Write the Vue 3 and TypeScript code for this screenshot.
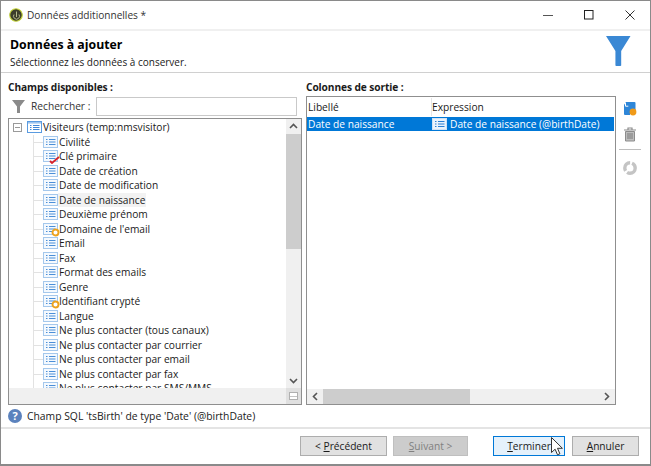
<script setup lang="ts">
interface Field { label: string; mark?: 'key' | 'calc'; hover?: boolean }
const fields: Field[] = [
  { label: 'Civilité' },
  { label: 'Clé primaire', mark: 'key' },
  { label: 'Date de création' },
  { label: 'Date de modification' },
  { label: 'Date de naissance', hover: true },
  { label: 'Deuxième prénom' },
  { label: "Domaine de l'email", mark: 'calc' },
  { label: 'Email' },
  { label: 'Fax' },
  { label: 'Format des emails' },
  { label: 'Genre' },
  { label: 'Identifiant crypté', mark: 'calc' },
  { label: 'Langue' },
  { label: 'Ne plus contacter (tous canaux)' },
  { label: 'Ne plus contacter par courrier' },
  { label: 'Ne plus contacter par email' },
  { label: 'Ne plus contacter par fax' },
  { label: 'Ne plus contacter par SMS/MMS' },
]
</script>

<template>
  <div class="page">
    <div class="window">
      <div class="titlebar">
        <svg class="logo" width="14" height="14" viewBox="0 0 14 14">
          <circle cx="7" cy="7" r="6.3" fill="#3d3d2c" stroke="#c8d83c" stroke-width="1.1" />
          <path d="M7.5 3.5v5.5M5 6.5a3 3 0 1 0 5 0" fill="none" stroke="#b8bc8c" stroke-width="1" />
        </svg>
        <span class="title">Données additionnelles *</span>
        <div class="winctl">
          <svg width="10" height="10" viewBox="0 0 10 10"><path d="M0 5.5h10" stroke="#555" stroke-width="1" /></svg>
          <svg width="10" height="10" viewBox="0 0 10 10"><rect x=".5" y=".5" width="8.5" height="8.5" fill="none" stroke="#222" /></svg>
          <svg width="10" height="10" viewBox="0 0 10 10"><path d="M.5.5l9 9M9.5.5l-9 9" stroke="#333" stroke-width="1" /></svg>
        </div>
      </div>

      <header class="head">
        <div>
          <h1>Données à ajouter</h1>
          <p>Sélectionnez les données à conserver.</p>
        </div>
        <svg class="bigfunnel" width="25" height="30" viewBox="0 0 26 31">
          <path d="M0 0h25.5L15.8 15.5V30.5a1 1 0 0 1-1 .5h-4a1 1 0 0 1-1-.5V15.5z" fill="#3a88d4" />
        </svg>
      </header>

      <main class="body">
        <section class="left">
          <div class="lab">Champs disponibles :</div>
          <div class="search">
            <svg class="sfunnel" width="13" height="13" viewBox="0 0 13 13">
              <path d="M0 0h13L8 6.5V13H5V6.5z" fill="#8a8a8a" />
            </svg>
            <span class="slabel">Rechercher :</span>
            <div class="sinput"></div>
          </div>
          <div class="tree">
            <div class="treemain">
              <div class="rows">
                <div class="root">
                  <span class="minus"></span>
                  <svg class="fi rooti" viewBox="0 0 15 12"><rect x=".5" y=".5" width="14" height="11" fill="#fff" stroke="#5a9be0" /><rect x="1" y="1" width="13" height="1.6" fill="#9cc4ee" /><path d="M3 4.5h1.5M3 6.5h1.5M3 8.5h1.5M6 4.5h6.5M6 6.5h6.5M6 8.5h6.5" stroke="#3f86d6" /></svg>
                  <span>Visiteurs (temp:nmsvisitor)</span>
                </div>
                <div v-for="(f, i) in fields" :key="f.label" class="row">
                  <span class="branch" :class="{ first: i === 0 }"></span>
                  <span class="iconwrap">
                    <svg class="fi" viewBox="0 0 15 12"><rect x=".5" y=".5" width="14" height="11" fill="#f4f9fe" stroke="#a5c8ec" /><path d="M3 3.5h1.5M3 6h1.5M3 8.5h1.5M6 3.5h6.5M6 6h6.5M6 8.5h6.5" stroke="#4b8fd8" /></svg>
                    <svg v-if="f.mark === 'key'" class="mark key" width="11" height="8" viewBox="0 0 11 8"><path d="M1 5l2 2L10 1" fill="none" stroke="#d8222a" stroke-width="1.8" /></svg>
                    <svg v-if="f.mark === 'calc'" class="mark" width="9" height="9" viewBox="0 0 9 9"><circle cx="4.5" cy="4.5" r="3" fill="#fff" stroke="#eda21c" stroke-width="1.9" /></svg>
                  </span>
                  <span class="txt" :class="{ hover: f.hover }">{{ f.label }}</span>
                </div>
              </div>
              <div class="vbar">
                <svg width="15" height="15" viewBox="0 0 15 15"><path d="M4 9l3.5-3.5L11 9" fill="none" stroke="#555" stroke-width="1.6" /></svg>
                <div class="vtrack"><div class="vthumb"></div></div>
                <svg width="15" height="15" viewBox="0 0 15 15"><path d="M4 6l3.5 3.5L11 6" fill="none" stroke="#555" stroke-width="1.6" /></svg>
              </div>
            </div>
            <div class="treefoot">
              <div class="corner"><i></i></div>
            </div>
          </div>
        </section>

        <section class="right">
          <div class="lab">Colonnes de sortie :</div>
          <div class="rightrow">
            <div class="table">
              <div class="thead">
                <span class="c1">Libellé</span>
                <span class="c2">Expression</span>
              </div>
              <div class="tsel">
                <span class="c1">Date de naissance</span>
                <span class="c2 exp">
                  <svg class="fi" viewBox="0 0 15 12"><rect x=".5" y=".5" width="14" height="11" fill="#eaf3fc" stroke="#cfe2f6" /><path d="M3 3.5h1.5M3 6h1.5M3 8.5h1.5M6 3.5h6.5M6 6h6.5M6 8.5h6.5" stroke="#2b7fd4" /></svg>
                  Date de naissance (@birthDate)
                </span>
              </div>
              <div class="tfill"></div>
              <div class="hbar">
                <svg width="16" height="15" viewBox="0 0 16 15"><path d="M10 4L6.5 7.5 10 11" fill="none" stroke="#555" stroke-width="1.6" /></svg>
                <div class="htrack"><div class="hthumb"></div></div>
                <svg width="16" height="15" viewBox="0 0 16 15"><path d="M6 4l3.5 3.5L6 11" fill="none" stroke="#555" stroke-width="1.6" /></svg>
              </div>
            </div>
            <div class="tools">
              <svg width="14" height="15" viewBox="0 0 14 15">
                <path d="M3 1h8.5a1 1 0 0 1 1 1v7H7v5H2a1 1 0 0 1-1-1V4z" fill="#2e86d8" />
                <path d="M2.5 2v3.2h2.8" fill="none" stroke="#fff" />
                <circle cx="10" cy="11" r="3.4" fill="#f09a18" />
              </svg>
              <svg width="14" height="15" viewBox="0 0 14 15">
                <path d="M1 3h12M5 3V1h4v2" fill="none" stroke="#8c8c8c" stroke-width="1.2" />
                <path d="M2.5 4.5h9V14h-9z" fill="#bdbdbd" stroke="#8c8c8c" />
                <path d="M5 6v6M7 6v6M9 6v6" stroke="#7a7a7a" />
              </svg>
              <div class="toolsep"></div>
              <svg width="16" height="16" viewBox="0 0 16 16">
                <circle cx="8" cy="8" r="5.2" fill="none" stroke="#c4c4c4" stroke-width="3.4" stroke-dasharray="11 2" />
              </svg>
            </div>
          </div>
        </section>
      </main>

      <div class="status">
        <span class="qmark">?</span>
        <span>Champ SQL 'tsBirth' de type 'Date' (@birthDate)</span>
      </div>

      <footer class="foot">
        <button class="btn prev">&lt; <u>P</u>récédent</button>
        <button class="btn next" disabled><u>S</u>uivant &gt;</button>
        <button class="btn finish"><u>T</u>erminer</button>
        <button class="btn cancel"><u>A</u>nnuler</button>
      </footer>

      <svg class="cursor" width="12" height="19" viewBox="0 0 12 19">
        <path d="M.5.5v15l3.6-3.3 2.4 5.6 2.4-1-2.4-5.5h4.9z" fill="#fff" stroke="#333" stroke-width="1" />
      </svg>
    </div>
  </div>
</template>

<style scoped>
.page {
  width: 651px;
  height: 466px;
  overflow: hidden;
  background: #8a8a8a;
  font-family: "Open Sans", "Noto Sans", sans-serif;
  font-size: 10.2px;
  color: #1a1a1a;
}
.window {
  position: relative;
  width: 649px;
  height: 463px;
  margin-left: 1px;
  margin-top: 1px;
  background: #fff;
  display: flex;
  flex-direction: column;
}
.titlebar {
  height: 28px;
  display: flex;
  align-items: center;
  padding-left: 8px;
  flex: none;
  border-bottom: 2px solid #f0f0f0;
}
.logo { margin-right: 4px; }
.title { font-size: 10.1px; color: #333; }
.winctl {
  margin-left: auto;
  display: flex;
  gap: 31px;
  padding-right: 15px;
}
.head {
  height: 42px;
  flex: none;
  display: flex;
  justify-content: space-between;
  padding: 5px 19px 0 9px;
  box-sizing: border-box;
  border-bottom: 1px solid #d0d0d0;
}
.head h1 {
  margin: 0;
  font-size: 12.3px;
  font-weight: 700;
  line-height: 18px;
  color: #000;
}
.head p { margin: 2px 0 0; line-height: 13px; font-size: 10px; }
.bigfunnel { margin-top: 0; }
.body {
  display: flex;
  padding: 6px 0 0 7px;
  gap: 4px;
  flex: none;
  height: 332px;
  box-sizing: border-box;
}
.left { width: 294px; flex: none; display: flex; flex-direction: column; }
.lab { font-weight: 700; height: 17px; line-height: 16px; letter-spacing: -.1px; }
.search {
  height: 20px;
  display: flex;
  align-items: center;
  margin-bottom: 2px;
}
.sfunnel { margin: 0 0 0 4px; flex: none; }
.slabel { margin-left: 6px; width: 56px; color: #333; white-space: nowrap; }
.sinput {
  width: 201px;
  height: 19px;
  border: 1px solid #c9c9c9;
  box-sizing: border-box;
  margin-left: auto;
  margin-right: 5px;
}
.tree {
  flex: 1;
  min-height: 0;
  border: 1px solid #8f8f8f;
  display: flex;
  flex-direction: column;
}
.treemain { flex: 1; min-height: 0; display: flex; }
.rows { flex: 1; overflow: hidden; padding-top: 1px; }
.root, .row { height: 14.5px; display: flex; align-items: center; white-space: nowrap; }
.root { padding-left: 4px; }
.minus {
  width: 9px;
  height: 9px;
  border: 1px solid #9a9a9a;
  background: linear-gradient(#999, #999) center / 5px 1px no-repeat;
  box-sizing: border-box;
  margin-right: 5px;
  flex: none;
}
.fi { width: 15px; height: 12px; flex: none; }
.rooti { margin-right: 1px; }
.branch {
  position: relative;
  width: 10px;
  height: 100%;
  margin-left: 24px;
  border-left: 1px solid #e2e2e2;
  box-sizing: border-box;
  flex: none;
}
.branch::after {
  content: "";
  position: absolute;
  left: 0;
  right: 0;
  top: 7px;
  border-top: 1px solid #e2e2e2;
}
.iconwrap { position: relative; width: 15px; height: 12px; flex: none; }
.iconwrap .fi { display: block; }
.mark { position: absolute; right: -2px; bottom: -2px; }
.txt { padding: 0 1px; line-height: 14.5px; }
.txt.hover { background: #f2f2f2; }
.vbar {
  width: 15px;
  flex: none;
  background: #f0f0f0;
  display: flex;
  flex-direction: column;
}
.vbar svg { flex: none; }
.vtrack { flex: 1; min-height: 0; }
.vthumb { height: 115px; background: #cdcdcd; }
.treefoot {
  height: 16px;
  flex: none;
  background: #f0f0f0;
  display: flex;
  justify-content: flex-end;
}
.corner {
  width: 15px;
  display: flex;
  align-items: center;
  justify-content: center;
  background: #e0e0e0;
}
.corner i {
  width: 9px;
  height: 8px;
  border: 1px solid #b0b0b0;
  background: #fff linear-gradient(90deg, #888 60%, transparent 60%) center / 2px 1px repeat-x;
  box-sizing: border-box;
}
.right { flex: none; width: 338px; display: flex; flex-direction: column; }
.rightrow { flex: 1; min-height: 0; display: flex; }
.table {
  width: 310px;
  border: 1px solid #8f8f8f;
  box-sizing: border-box;
  display: flex;
  flex-direction: column;
}
.thead {
  height: 20px;
  flex: none;
  display: flex;
  align-items: center;
}
.c1 { width: 124px; flex: none; padding-left: 1px; box-sizing: border-box; }
.thead .c2 { border-left: 1px solid #e5e5e5; padding-left: 0; line-height: 18px; }
.thead .c1 { line-height: 18px; }
.tsel {
  height: 14px;
  flex: none;
  display: flex;
  align-items: center;
  background: #0078d7;
  color: #fff;
  margin-right: 1px;
}
.exp { display: flex; align-items: center; gap: 3px; padding-left: 1px; }
.tfill { flex: 1; min-height: 0; }
.hbar {
  height: 15px;
  flex: none;
  background: #f0f0f0;
  display: flex;
}
.hbar svg { flex: none; }
.htrack { flex: 1; min-width: 0; }
.hthumb { width: 147px; height: 100%; background: #cdcdcd; }
.tools {
  width: 28px;
  flex: none;
  display: flex;
  flex-direction: column;
  align-items: center;
  padding-top: 5px;
}
.tools svg { flex: none; }
.tools svg + svg { margin-top: 11px; }
.toolsep { width: 22px; height: 1px; background: #bdbdbd; margin: 7px 0 10px; }
.status {
  height: 22px;
  flex: none;
  display: flex;
  align-items: center;
  gap: 5px;
  padding-left: 7px;
  border-bottom: 2px solid #e4e4e4;
  box-sizing: content-box;
  font-size: 10.35px;
}
.qmark {
  width: 14px;
  height: 14px;
  border-radius: 50%;
  background: #5b82bd;
  color: #fff;
  font-weight: 700;
  font-size: 11px;
  line-height: 14px;
  text-align: center;
  flex: none;
}
.foot {
  flex: 1;
  display: flex;
  align-items: flex-start;
  padding: 7px 0 0 299px;
}
.btn {
  height: 20px;
  box-sizing: border-box;
  padding: 0;
  font: inherit;
  color: #1a1a1a;
  background: #e1e1e1;
  border: 1px solid #adadad;
  flex: none;
}
.prev { width: 87px; }
.next { width: 75px; margin-left: 6px; background: #cccccc; border-color: #bfbfbf; color: #808080; }
.finish { width: 72px; margin-left: 25px; background: #e5f1fb; border-color: #0078d7; }
.cancel { width: 67px; margin-left: 7px; }
.cursor { position: absolute; left: 550px; top: 436px; }
</style>
